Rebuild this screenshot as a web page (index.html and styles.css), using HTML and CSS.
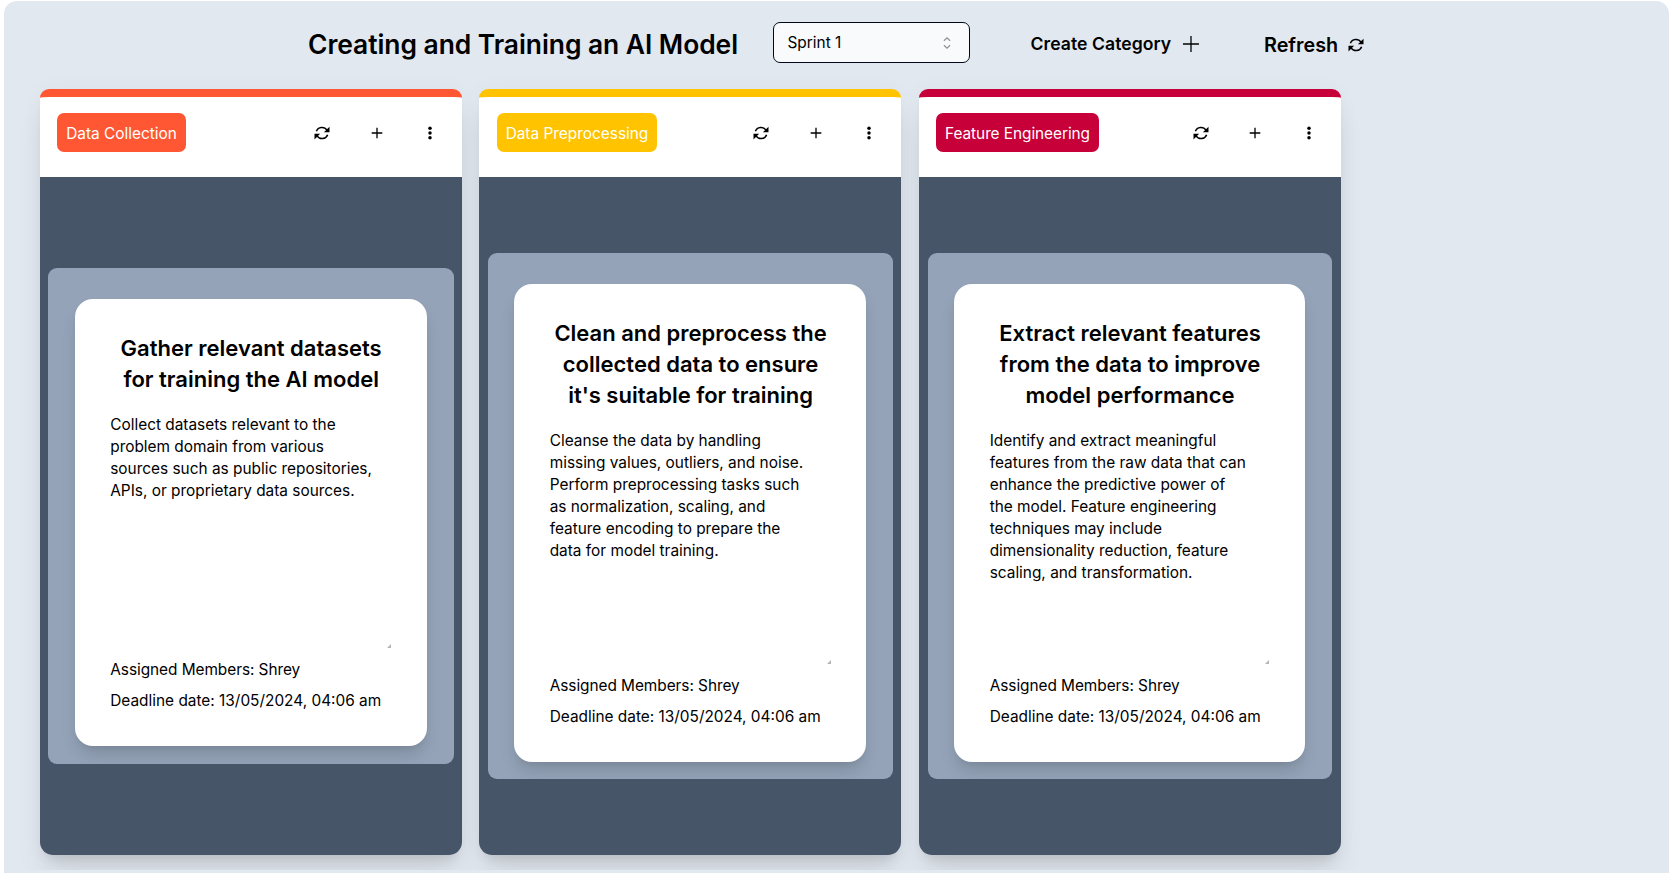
FILE: index.html
```html
<!DOCTYPE html>
<html lang="en">
<head>
<meta charset="utf-8">
<title>Creating and Training an AI Model</title>
<link rel="stylesheet" href="styles.css">
</head>
<body>
<svg class="defs" aria-hidden="true">
  <symbol id="i-refresh" viewBox="0 0 24 24"><path d="M4.5 9.8A7.9 7.9 0 0 1 18.6 8.2M19.5 14.2A7.9 7.9 0 0 1 5.4 15.8" fill="none" stroke="currentColor" stroke-width="2"/><path d="M22 3.5v7.5h-7.5zM2 20.5v-7.5h7.5z" fill="currentColor"/></symbol>
  <symbol id="i-plus" viewBox="0 0 24 24"><path d="M12 4v16M4 12h16" fill="none" stroke="currentColor" stroke-width="2"/></symbol>
  <symbol id="i-dots" viewBox="0 0 24 24"><circle cx="12" cy="4" r="3"/><circle cx="12" cy="12" r="3"/><circle cx="12" cy="20" r="3"/></symbol>
</svg>
<main class="board">
  <header class="topbar">
    <h1 class="title">Creating and Training an AI Model</h1>
    <div class="select"><span>Sprint 1</span><svg class="chevrons" viewBox="0 0 10 14"><path d="M1.9 4.7 5 1.8l3.1 2.9M1.9 9.3 5 12.2l3.1-2.9" fill="none" stroke="currentColor" stroke-width="1.3"/></svg></div>
    <button class="action create">Create Category <svg class="plus-lg" viewBox="0 0 16 16"><path d="M8 0v16M0 8h16" stroke="currentColor" stroke-width="1.3"/></svg></button>
    <button class="action refresh">Refresh <svg class="sync"><use href="#i-refresh"/></svg></button>
  </header>
  <div class="columns">
    <section class="column orange">
      <div class="column-head"><span class="tag">Data Collection</span><div class="tools"><svg class="sync"><use href="#i-refresh"/></svg><svg class="plus"><use href="#i-plus"/></svg><svg class="dots"><use href="#i-dots"/></svg></div></div>
      <div class="column-body"><div class="slot"><article class="card">
        <h2>Gather relevant datasets for training the AI model</h2>
        <div class="desc">Collect datasets relevant to the<br>problem domain from various<br>sources such as public repositories,<br>APIs, or proprietary data sources.<svg class="grip" viewBox="0 0 4 4"><path d="M4 0v4H0z"/></svg></div>
        <p class="members">Assigned Members: Shrey</p><p>Deadline date: 13/05/2024, 04:06 am</p>
      </article></div></div>
    </section>
    <section class="column yellow">
      <div class="column-head"><span class="tag">Data Preprocessing</span><div class="tools"><svg class="sync"><use href="#i-refresh"/></svg><svg class="plus"><use href="#i-plus"/></svg><svg class="dots"><use href="#i-dots"/></svg></div></div>
      <div class="column-body"><div class="slot"><article class="card">
        <h2>Clean and preprocess the collected data to ensure it's suitable for training</h2>
        <div class="desc">Cleanse the data by handling<br>missing values, outliers, and noise.<br>Perform preprocessing tasks such<br>as normalization, scaling, and<br>feature encoding to prepare the<br>data for model training.<svg class="grip" viewBox="0 0 4 4"><path d="M4 0v4H0z"/></svg></div>
        <p class="members">Assigned Members: Shrey</p><p>Deadline date: 13/05/2024, 04:06 am</p>
      </article></div></div>
    </section>
    <section class="column crimson">
      <div class="column-head"><span class="tag">Feature Engineering</span><div class="tools"><svg class="sync"><use href="#i-refresh"/></svg><svg class="plus"><use href="#i-plus"/></svg><svg class="dots"><use href="#i-dots"/></svg></div></div>
      <div class="column-body"><div class="slot"><article class="card">
        <h2>Extract relevant features from the data to improve model performance</h2>
        <div class="desc">Identify and extract meaningful<br>features from the raw data that can<br>enhance the predictive power of<br>the model. Feature engineering<br>techniques may include<br>dimensionality reduction, feature<br>scaling, and transformation.<svg class="grip" viewBox="0 0 4 4"><path d="M4 0v4H0z"/></svg></div>
        <p class="members">Assigned Members: Shrey</p><p>Deadline date: 13/05/2024, 04:06 am</p>
      </article></div></div>
    </section>
  </div>
</main>
</body>
</html>
```
FILE: styles.css
```css
* { box-sizing: border-box; }
body { margin: 0; background: #fff; color: #000; font-family: Inter, "Liberation Sans", sans-serif; overflow: hidden; }
h1, h2, p { margin: 0; }
svg { display: block; flex: none; }
.defs { display: none; }
.board { margin: 1px 4px 0; height: 872px; border-radius: 13px 13px 0 0; background: #e2e8f0; overflow: hidden; }
.topbar { display: flex; align-items: flex-start; height: 76px; padding-left: 304px; }
.title { width: 465px; padding-top: 24px; font-size: 26.4px; line-height: 38px; font-weight: 600; letter-spacing: -.04px; white-space: nowrap; }
.select { display: flex; align-items: center; justify-content: space-between; width: 197px; height: 41px; margin-top: 21px; padding: 0 17px 0 13.5px; border: 1px solid #020817; border-radius: 7px; background: #f8fafc; font-size: 15.4px; }
.chevrons { width: 10px; height: 14px; color: #919293; }
.action { display: flex; align-items: center; padding: 0; border: 0; background: none; color: #000; font-family: inherit; font-weight: 600; white-space: nowrap; }
.create { width: 233.5px; margin: 30px 0 0 60.5px; gap: 12px; font-size: 17.6px; line-height: 26px; letter-spacing: .05px; }
.plus-lg { width: 16px; height: 16px; }
.refresh { margin-top: 31px; gap: 9px; font-size: 19.8px; line-height: 26px; }
.sync { width: 18px; height: 18px; }
.columns { display: flex; gap: 17.45px; height: 793px; padding: 12px 36px 0; overflow: hidden; }
.column { display: flex; flex: none; flex-direction: column; width: 422px; height: 766px; border-top: 8px solid; border-radius: 9px 9px 13px 13px; background: #fff; box-shadow: 0 22px 28px -5px rgba(0,0,0,.1), 0 9px 11px -6px rgba(0,0,0,.1), 0 0 22px rgba(0,0,0,.03); }
.orange { border-color: #ff5733; --tone: #ff5733; }
.yellow { border-color: #ffc300; --tone: #ffc300; }
.crimson { border-color: #c70039; --tone: #c70039; }
.column-head { display: flex; justify-content: space-between; height: 80px; padding: 16px 24px 0 17.2px; }
.tag { height: 39px; padding: 0 9px; border-radius: 7px; background: var(--tone); color: #fff; font-size: 15.4px; line-height: 41px; }
.crimson .tag { letter-spacing: -.06px; }
.tools { display: flex; align-items: center; height: 39px; gap: 37.5px; }
.plus { width: 16px; height: 16px; }
.dots { width: 16px; height: 14px; }
.column-body { flex: 1; display: flex; align-items: center; padding: 0 8.45px; border-radius: 0 0 13px 13px; background: #475569; }
.crimson .column-body { padding: 0 9px; }
.slot { flex: 1; padding: 30.8px 27px 17.4px 26.5px; border-radius: 9px; background: #94a3b8; overflow: hidden; }
.card { padding: 34.4px 34.5px 30px 35.3px; border-radius: 18px; background: #fff; box-shadow: 0 11px 17px -3px rgba(0,0,0,.14), 0 4px 7px -4px rgba(0,0,0,.1); font-size: 15.4px; }
.card h2 { font-size: 22px; line-height: 31px; font-weight: 600; text-align: center; }
.desc { position: relative; height: 259px; padding-top: 19px; line-height: 22px; white-space: nowrap; }
.card p { line-height: 31px; white-space: nowrap; }
.card .members { letter-spacing: -.05px; }
.grip { position: absolute; right: 1px; bottom: 6px; width: 4px; height: 4px; fill: #b5b5b5; }
```
